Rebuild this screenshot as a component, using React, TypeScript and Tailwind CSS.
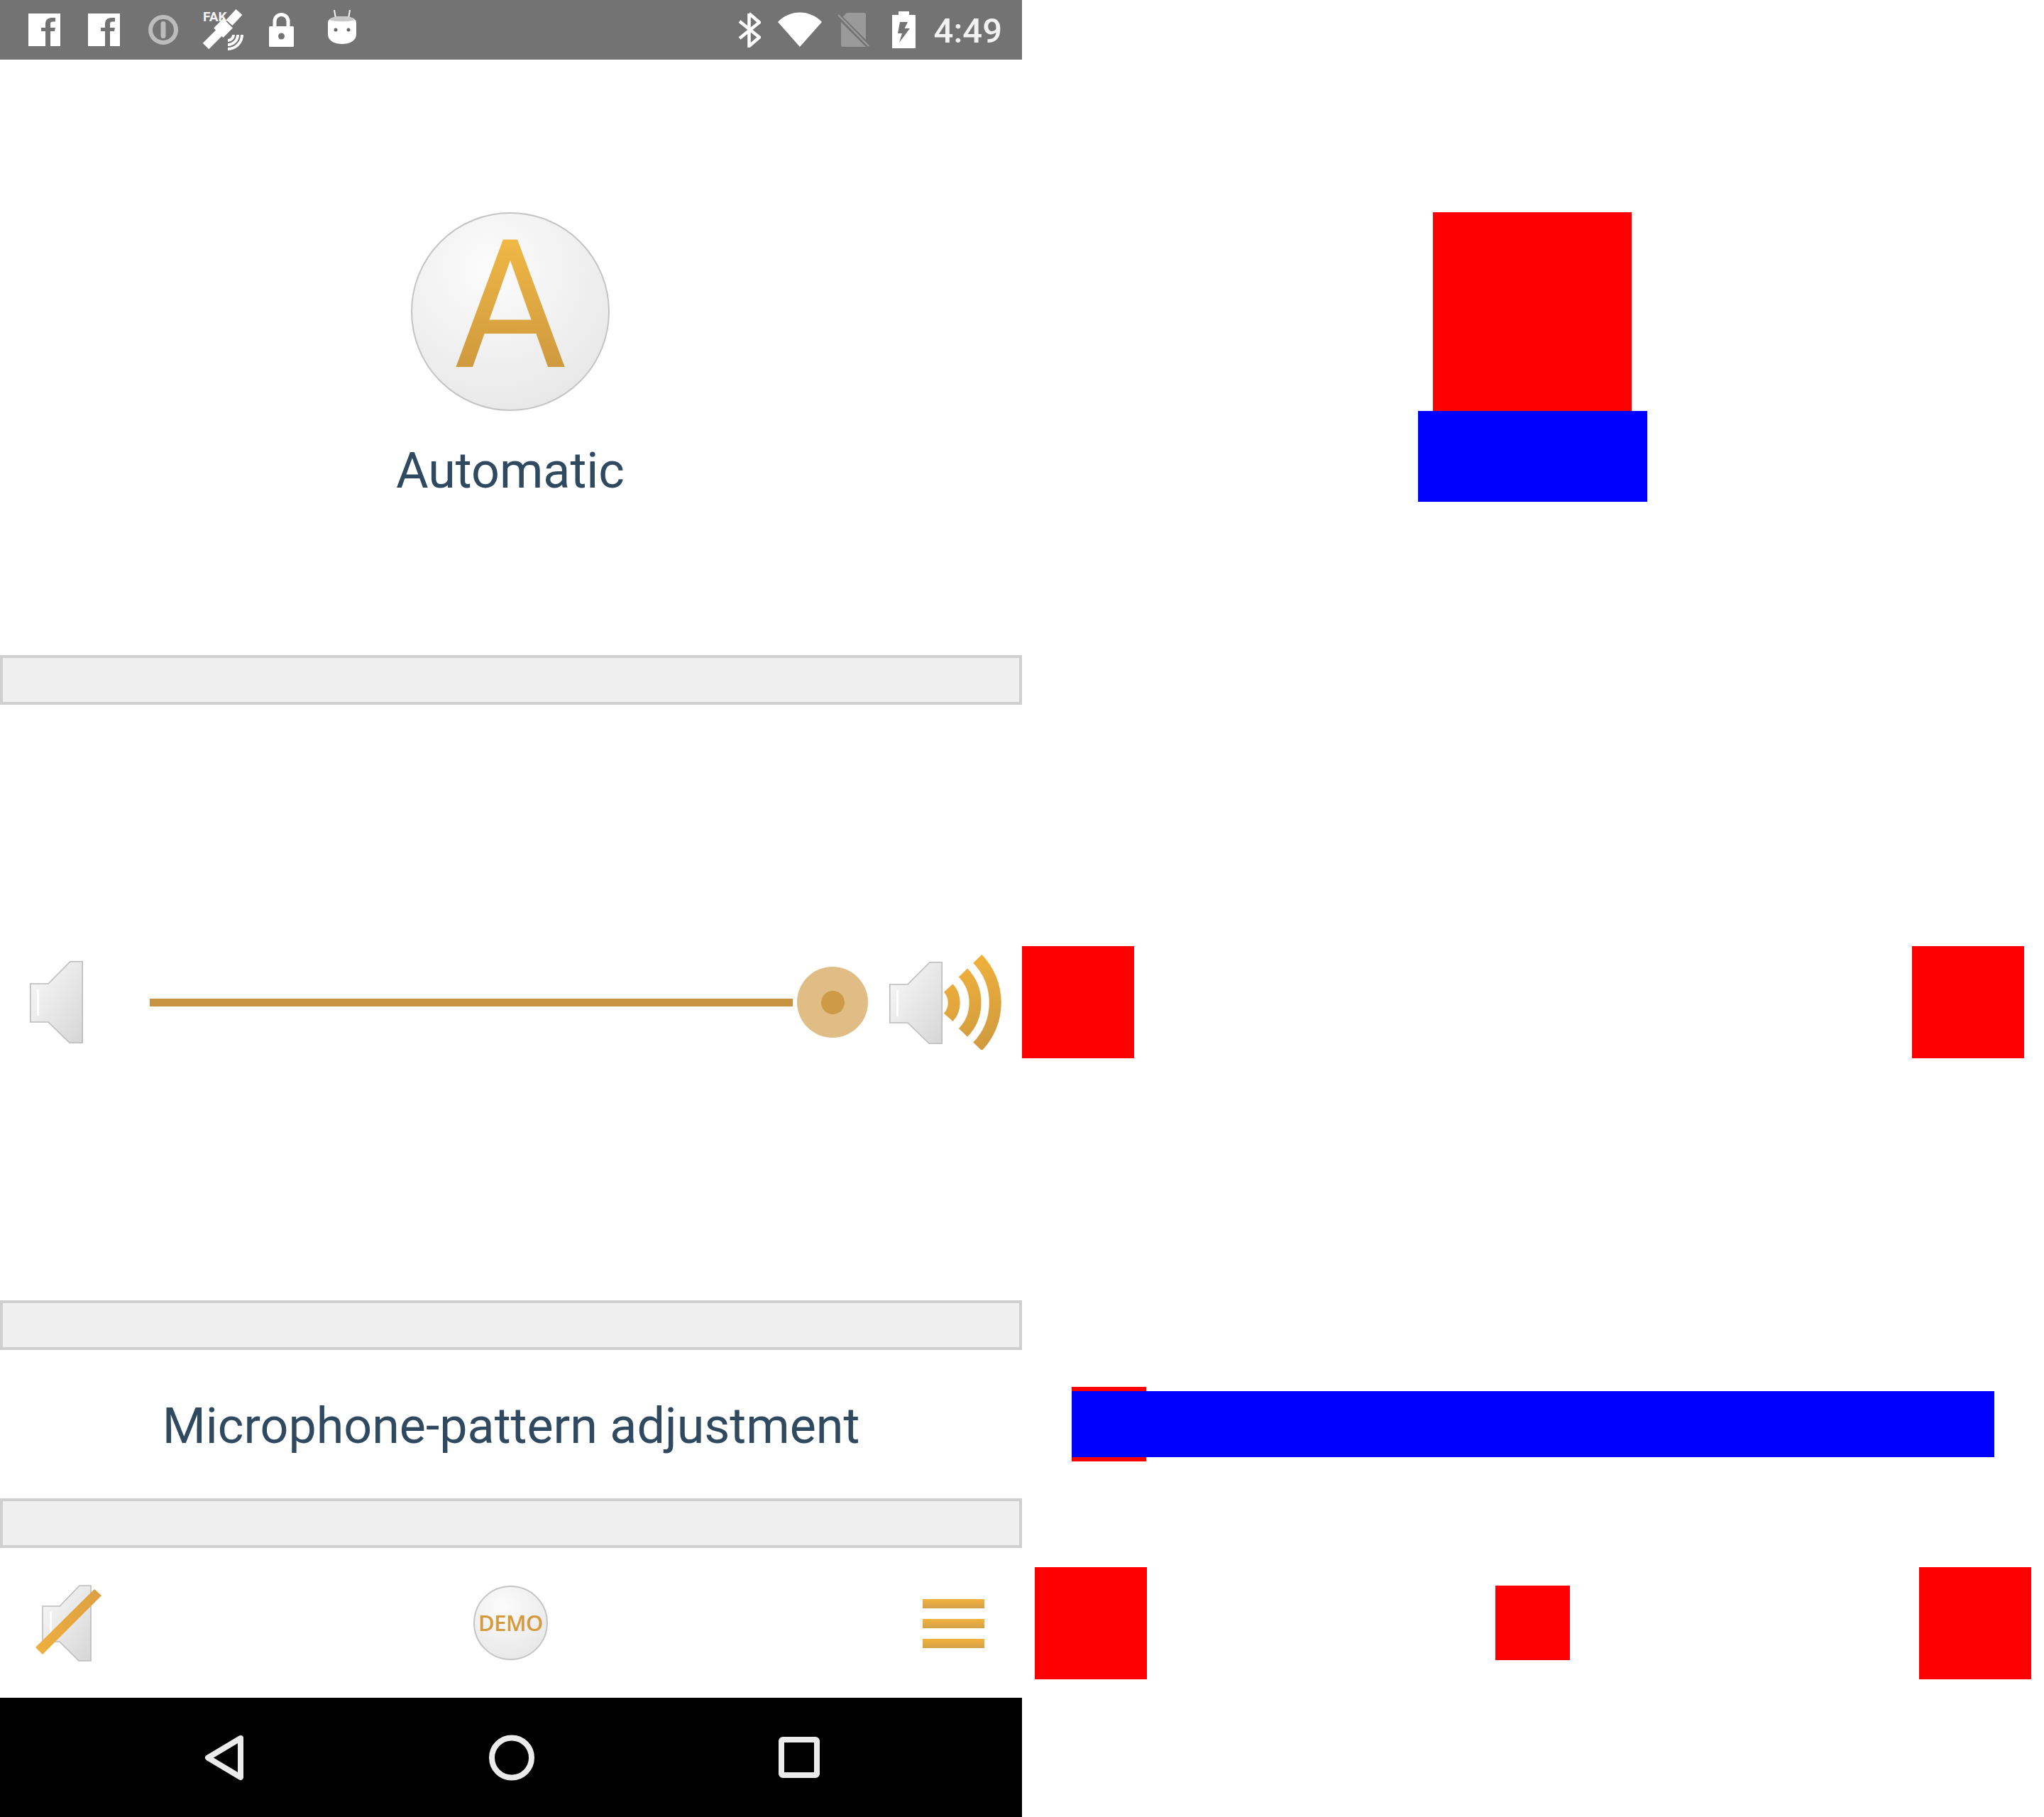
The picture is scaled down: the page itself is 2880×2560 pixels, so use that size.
const SPEAKER = '0.8,32 26,32 57,0.8 74.2,0.8 74.2,115.2 56,115.2 26,86 0.8,86';

function Speaker({ id, className }: { id: string; className?: string }) {
  return (
    <svg width="75" height="116" viewBox="0 0 75 116" className={className}>
      <defs>
        <linearGradient id={id} x1="0" y1="0" x2="1" y2="1">
          <stop offset="0" stopColor="#fafafa" />
          <stop offset="1" stopColor="#d6d6d6" />
        </linearGradient>
      </defs>
      <polygon points={SPEAKER} fill={`url(#${id})`} stroke="#bcbcbc" strokeWidth="1.6" />
      <rect x="10" y="40" width="3" height="37" fill="#ffffff" />
    </svg>
  );
}

function SpeakerLoud() {
  return (
    <svg width="158" height="134" viewBox="0 0 158 134">
      <defs>
        <linearGradient id="loudBody" x1="0" y1="0" x2="1" y2="1">
          <stop offset="0" stopColor="#fafafa" />
          <stop offset="1" stopColor="#d6d6d6" />
        </linearGradient>
        <linearGradient id="loudWave" gradientUnits="userSpaceOnUse" x1="80" y1="0" x2="130" y2="134">
          <stop offset="0" stopColor="#f4b33a" />
          <stop offset="1" stopColor="#d09a3f" />
        </linearGradient>
      </defs>
      <g transform="translate(0 10)">
        <polygon points={SPEAKER} fill="url(#loudBody)" stroke="#bcbcbc" strokeWidth="1.6" />
        <rect x="10" y="40" width="3" height="37" fill="#ffffff" />
      </g>
      <g fill="none" stroke="url(#loudWave)" strokeWidth="17">
        <path d="M83.3 47 A31 31 0 0 1 83.3 88.4" />
        <path d="M104 25.5 A60.7 60.7 0 0 1 104 109.9" />
        <path d="M124.3 5.9 A89 89 0 0 1 124.3 129.5" />
      </g>
    </svg>
  );
}

function SpeakerMuted() {
  return (
    <svg width="93" height="108" viewBox="0 0 93 108">
      <defs>
        <linearGradient id="muteBody" x1="0" y1="0" x2="1" y2="1">
          <stop offset="0" stopColor="#fafafa" />
          <stop offset="1" stopColor="#d6d6d6" />
        </linearGradient>
        <linearGradient id="muteBar" x1="0" y1="1" x2="1" y2="0">
          <stop offset="0" stopColor="#eeb03e" />
          <stop offset="1" stopColor="#dca043" />
        </linearGradient>
      </defs>
      <polygon
        points="10,30 34,30 62,1 78,1 78,107 61,107 34,80 10,80"
        fill="url(#muteBody)"
        stroke="#bcbcbc"
        strokeWidth="1.6"
      />
      <rect x="20" y="38" width="3" height="32" fill="#ffffff" />
      <polygon points="0,88 10,98 93,15 83,6" fill="url(#muteBar)" />
    </svg>
  );
}

function FacebookIcon() {
  return (
    <svg width="45" height="46" viewBox="0 0 45 46">
      <path
        fill="#ffffff"
        fillRule="evenodd"
        d="M0 0H45V46H31V25H37L38 20H31V15C31 12.5 32 11.5 34.5 11.5H38V6H33C27 6 24 9.5 24 14.5V20H18V25H24V46H0Z"
      />
    </svg>
  );
}

function StatusIcons() {
  return (
    <>
      <div className="ml-[40px]">
        <FacebookIcon />
      </div>
      <div className="ml-[39px]">
        <FacebookIcon />
      </div>
      <svg width="42" height="42" viewBox="0 0 42 42" className="ml-[40px]">
        <circle cx="21" cy="21" r="18" fill="none" stroke="#bcbcbc" strokeWidth="6" />
        <rect x="17.5" y="9" width="7" height="24" rx="3.5" fill="#bcbcbc" />
      </svg>
      <svg width="58" height="58" viewBox="0 0 58 58" className="ml-[34px]">
        <text x="1" y="17" fill="#f4f4f4" fontSize="19" fontWeight="700" fontFamily="Roboto, sans-serif">
          FAK
        </text>
        <line x1="52" y1="4" x2="38" y2="19" stroke="#ffffff" strokeWidth="12" />
        <rect x="20" y="17" width="19" height="19" transform="rotate(45 29.5 26.5)" fill="#ffffff" />
        <line x1="25" y1="32" x2="5" y2="52" stroke="#ffffff" strokeWidth="12" />
        <g fill="none" stroke="#ffffff" strokeWidth="4">
          <path d="M36 44 A8 8 0 0 0 44 36" />
          <path d="M36 50 A14 14 0 0 0 50 36" />
          <path d="M36 56 A20 20 0 0 0 56 36" />
        </g>
      </svg>
      <svg width="35" height="48" viewBox="0 0 35 48" className="ml-[36px]">
        <path d="M8 20V12A9.5 9.5 0 0 1 27 12V20" fill="none" stroke="#ffffff" strokeWidth="5" />
        <rect x="0" y="19" width="35" height="29" rx="1.5" fill="#ffffff" />
        <circle cx="17.5" cy="33" r="4.5" fill="#737373" />
      </svg>
      <svg width="40" height="48" viewBox="0 0 40 48" className="ml-[48px] mb-[8px]">
        <path d="M9 0L11 12M31 0L29 12" stroke="#f4f4f4" strokeWidth="2" />
        <path d="M0 18C0 11 10 9 20 9S40 11 40 18V34C40 44 30 48 20 48S0 44 0 34Z" fill="#ffffff" />
        <path d="M2 14C5 10 12 9 20 9S35 10 38 14C32 17 8 17 2 14Z" fill="#c9c9c9" />
        <circle cx="11" cy="28" r="2.5" fill="#666666" />
        <circle cx="29" cy="28" r="2.5" fill="#666666" />
      </svg>
      <svg width="33" height="50" viewBox="0 0 33 50" className="ml-auto">
        <path
          d="M16.5 2V48L31 35.5L3 13M16.5 2L31 14.5L3 37"
          fill="none"
          stroke="#ffffff"
          strokeWidth="4.5"
        />
      </svg>
      <svg width="62" height="49" viewBox="0 0 62 49" className="ml-[24px]">
        <path d="M0 14C17 -4 45 -4 62 14L31 49Z" fill="#ffffff" />
      </svg>
      <svg width="45" height="48" viewBox="0 0 45 48" className="ml-[22px]">
        <path d="M13 0H37C39 0 40 1 40 3V48H8C6 48 5 47 5 45V8Z" fill="#9a9a9a" />
        <line x1="1" y1="4" x2="44" y2="47" stroke="#727272" strokeWidth="7" />
        <line x1="1" y1="3" x2="44" y2="47" stroke="#9a9a9a" strokeWidth="2.5" />
      </svg>
      <svg width="33" height="52" viewBox="0 0 33 52" className="ml-[32px]">
        <path
          fillRule="evenodd"
          fill="#ffffff"
          d="M9 0H24V5H33V52H0V5H9ZM22 15H11L8 31H14L10 44L25 24H17.5Z"
        />
      </svg>
      <span className="ml-[26px] mr-[28px] pt-[3px] text-[49px] leading-none font-medium text-[#f2f2f2]">
        4:49
      </span>
    </>
  );
}

function GrayBar() {
  return <div className="h-[70px] border-4 border-[#cfcfcf] bg-[#efefef]" />;
}

function NavButtons() {
  return (
    <>
      <svg width="56" height="65" viewBox="0 0 56 65" className="ml-[288px]">
        <polygon points="51,5 5,32.5 51,60" fill="none" stroke="#ebebeb" strokeWidth="8" strokeLinejoin="round" />
      </svg>
      <svg width="64" height="65" viewBox="0 0 64 65" className="ml-[345px]">
        <circle cx="32" cy="32.5" r="28" fill="none" stroke="#ebebeb" strokeWidth="8" />
      </svg>
      <svg width="58" height="58" viewBox="0 0 58 58" className="ml-[344px]">
        <rect x="4" y="4" width="50" height="50" rx="2" fill="none" stroke="#ebebeb" strokeWidth="8" />
      </svg>
    </>
  );
}

function PhoneScreen() {
  return (
    <div className="w-[1440px] h-[2560px] flex flex-col">
      <div className="h-[84px] bg-[#737373] flex items-center">
        <StatusIcons />
      </div>

      <div className="h-[839px] flex flex-col items-center pt-[215px] pr-[2px]">
        <div className="w-[280px] h-[280px] rounded-full border-2 border-[#c4c4c4] bg-[radial-gradient(circle_at_40%_28%,#fcfcfc,#e3e3e3)] flex justify-center">
          <span className="mt-[7px] h-[245px] text-[245px] leading-none font-normal scale-y-[1.03] bg-gradient-to-b from-[#f6bd45] to-[#c8933e] bg-clip-text text-transparent">
            A
          </span>
        </div>
        <div className="mt-[44px] text-[70px] leading-[80px] text-[#2f4a60]">Automatic</div>
      </div>

      <GrayBar />

      <div className="h-[840px] flex items-center pl-[42px]">
        <Speaker id="softBody" />
        <div className="ml-[94px] w-[906px] h-[11px] bg-[#c8933f]" />
        <div className="ml-[6px] w-[100px] h-[100px] rounded-full bg-[#dfbd85] flex items-center justify-center">
          <div className="w-[33px] h-[33px] rounded-full bg-[#cd9a45]" />
        </div>
        <div className="ml-[30px]">
          <SpeakerLoud />
        </div>
      </div>

      <GrayBar />

      <div className="h-[209px] flex items-center justify-center pt-[4px]">
        <span className="text-[70px] leading-[80px] text-[#2f4a60]">Microphone-pattern adjustment</span>
      </div>

      <GrayBar />

      <div className="h-[211px] flex items-center pl-[50px]">
        <SpeakerMuted />
        <div className="ml-[524px] w-[105px] h-[105px] rounded-full border-2 border-[#c4c4c4] bg-[radial-gradient(circle_at_40%_28%,#fcfcfc,#e3e3e3)] flex items-center justify-center">
          <span className="text-[31px] leading-none font-semibold font-[family-name:'Open_Sans',sans-serif] tracking-[-0.5px] text-[#d59a3c]">
            DEMO
          </span>
        </div>
        <div className="ml-auto mr-[53px] mt-[2px] w-[87px] flex flex-col gap-[15px]">
          <div className="h-[13px] bg-gradient-to-b from-[#f4b33d] to-[#d49f48]" />
          <div className="h-[13px] bg-gradient-to-b from-[#f4b33d] to-[#d49f48]" />
          <div className="h-[13px] bg-gradient-to-b from-[#f4b33d] to-[#d49f48]" />
        </div>
      </div>

      <div className="h-[168px] bg-black flex items-center">
        <NavButtons />
      </div>
    </div>
  );
}

function LayoutBoxes() {
  return (
    <div className="w-[1440px] h-[2560px] flex flex-col">
      <div className="pt-[299px] pr-[2px] flex flex-col items-center">
        <div className="w-[280px] h-[280px] bg-[#ff0000]" />
        <div className="w-[323px] h-[128px] bg-[#0000ff]" />
      </div>

      <div className="mt-[626px] pr-[28px] flex justify-between">
        <div className="w-[158px] h-[158px] bg-[#ff0000]" />
        <div className="w-[158px] h-[158px] bg-[#ff0000]" />
      </div>

      <div className="mt-[463px] ml-[70px] grid items-center">
        <div className="[grid-area:1/1] w-[105px] h-[105px] bg-[#ff0000]" />
        <div className="[grid-area:1/1] w-[1300px] h-[93px] bg-[#0000ff]" />
      </div>

      <div className="mt-[149px] px-[18px] flex items-center justify-between">
        <div className="w-[158px] h-[158px] bg-[#ff0000]" />
        <div className="mr-[2px] mb-[2px] w-[105px] h-[105px] bg-[#ff0000]" />
        <div className="w-[158px] h-[158px] bg-[#ff0000]" />
      </div>
    </div>
  );
}

export default function App() {
  return (
    <div className="w-[2880px] h-[2560px] bg-white flex overflow-hidden font-[family-name:Roboto,sans-serif]">
      <PhoneScreen />
      <LayoutBoxes />
    </div>
  );
}
